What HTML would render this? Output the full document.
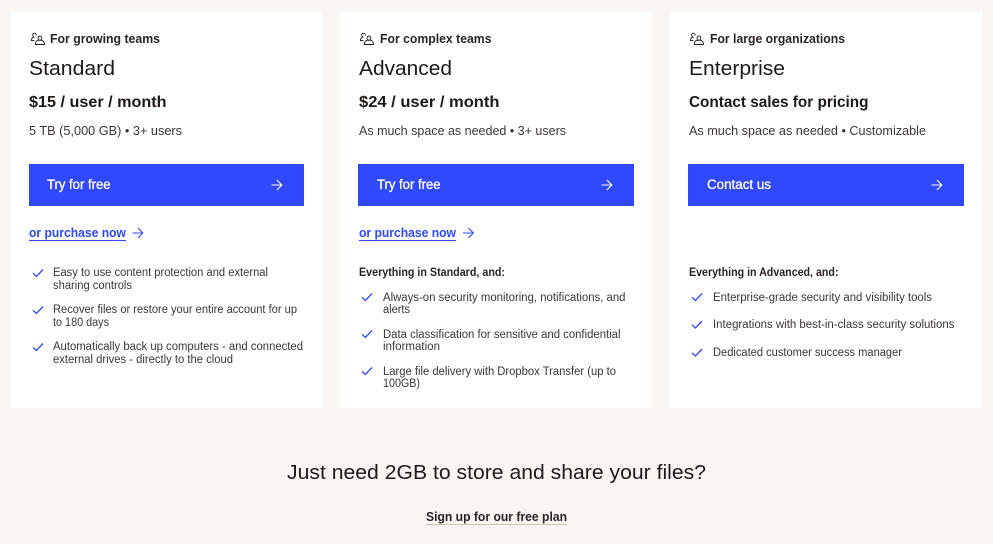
<!DOCTYPE html>
<html>
<head>
<meta charset="utf-8">
<style>
html,body{margin:0;padding:0;background:#f8f5f2;width:993px;height:544px;overflow:hidden}
svg{display:block}
text{font-family:"Liberation Sans",sans-serif;white-space:pre}
.eb{font-size:12.5px;font-weight:700;fill:#2a2525}
.h{font-size:20px;fill:#1e1919}
.p{font-size:15.5px;font-weight:700;fill:#1e1919}
.d{font-size:13px;fill:#3a3636}
.b{font-size:13.5px;fill:#fff;stroke:#fff;stroke-width:.3px}
.l{font-size:12.5px;font-weight:700;fill:#3049ff}
.li{font-size:11.5px;fill:#3a3636}
.e{font-size:11.5px;font-weight:700;fill:#2a2525}
.f{font-size:20px;fill:#1e1919}
.ic{fill:none;stroke:#1e1919;stroke-width:.9}
.ck{fill:none;stroke:#3049ff;stroke-width:1.300}
.aw{fill:none;stroke:#fff;stroke-width:1.100}
.al{fill:none;stroke:#3049ff;stroke-width:1.100}
</style>
</head>
<body>
<svg width="993" height="544" viewBox="0 0 993 544" xmlns="http://www.w3.org/2000/svg">
<defs>
<g id="people"><path class="ic" d="M5.200 2.600C5.400 1.200 4.600.2 3.500.2 2.400.2 1.700 1 1.700 2c0 1 .5 1.700 1.200 2.100C1.300 4.600.4 5.800.4 7.600H3.400"/><path class="ic" d="M4.400 11.500h9c0-2.300-.9-3.700-2.400-4.200H6.800C5.300 7.800 4.400 9.200 4.400 11.500zM8.900 7.200c1.100 0 1.900-.9 1.900-2.100S10 3 8.900 3 7 3.900 7 5.100s.8 2.100 1.900 2.100z"/></g>
<path id="check" class="ck" d="M0 3.800L3.400 7 10 0"/>
<path id="arrowW" class="aw" d="M0 5h10M5.400 0L10.300 5 5.400 10"/>
<path id="arrowB" class="al" d="M0 5h10M5.400 0L10.300 5 5.400 10"/>
</defs>

<rect width="993" height="544" fill="#f8f5f2"/>
<rect x="11" y="12" width="311" height="396" fill="#fff"/>
<rect x="340" y="12" width="312" height="396" fill="#fff"/>
<rect x="670" y="12" width="312" height="396" fill="#fff"/>

<!-- Card 1 -->
<use href="#people" x="31" y="33"/>
<text class="eb" x="50" y="43" textLength="110" lengthAdjust="spacingAndGlyphs">For growing teams</text>
<text class="h" x="29" y="75" textLength="86" lengthAdjust="spacingAndGlyphs">Standard</text>
<text class="p" x="29" y="107" textLength="137.500" lengthAdjust="spacingAndGlyphs">$15 / user / month</text>
<text class="d" x="29" y="135" textLength="153" lengthAdjust="spacingAndGlyphs">5 TB (5,000 GB) • 3+ users</text>
<rect x="29" y="164" width="275" height="42" fill="#3049ff"/>
<text class="b" x="47" y="189" textLength="63.500" lengthAdjust="spacingAndGlyphs">Try for free</text>
<use href="#arrowW" x="271.500" y="180"/>
<text class="l" x="29" y="237" textLength="97" lengthAdjust="spacingAndGlyphs">or purchase now</text>
<rect x="29" y="240" width="97" height="1" fill="#3049ff"/>
<use href="#arrowB" x="132.500" y="228"/>
<use href="#check" x="33" y="269.500"/>
<text class="li" x="53" y="276" textLength="215" lengthAdjust="spacingAndGlyphs">Easy to use content protection and external</text>
<text class="li" x="53" y="289" textLength="79" lengthAdjust="spacingAndGlyphs">sharing controls</text>
<use href="#check" x="33" y="306.500"/>
<text class="li" x="53" y="313" textLength="244" lengthAdjust="spacingAndGlyphs">Recover files or restore your entire account for up</text>
<text class="li" x="53" y="326" textLength="56" lengthAdjust="spacingAndGlyphs">to 180 days</text>
<use href="#check" x="33" y="343.500"/>
<text class="li" x="53" y="350" textLength="250" lengthAdjust="spacingAndGlyphs">Automatically back up computers - and connected</text>
<text class="li" x="53" y="363" textLength="180" lengthAdjust="spacingAndGlyphs">external drives - directly to the cloud</text>

<!-- Card 2 -->
<use href="#people" x="360" y="33"/>
<text class="eb" x="380" y="43" textLength="111.500" lengthAdjust="spacingAndGlyphs">For complex teams</text>
<text class="h" x="359" y="75" textLength="93" lengthAdjust="spacingAndGlyphs">Advanced</text>
<text class="p" x="359" y="107" textLength="140.500" lengthAdjust="spacingAndGlyphs">$24 / user / month</text>
<text class="d" x="359" y="135" textLength="207" lengthAdjust="spacingAndGlyphs">As much space as needed • 3+ users</text>
<rect x="358" y="164" width="276" height="42" fill="#3049ff"/>
<text class="b" x="377" y="189" textLength="63.500" lengthAdjust="spacingAndGlyphs">Try for free</text>
<use href="#arrowW" x="601.500" y="180"/>
<text class="l" x="359" y="237" textLength="97" lengthAdjust="spacingAndGlyphs">or purchase now</text>
<rect x="359" y="240" width="97" height="1" fill="#3049ff"/>
<use href="#arrowB" x="463" y="228"/>
<text class="e" x="359" y="276" textLength="146" lengthAdjust="spacingAndGlyphs">Everything in Standard, and:</text>
<use href="#check" x="362" y="293.500"/>
<text class="li" x="383" y="301" textLength="242.500" lengthAdjust="spacingAndGlyphs">Always-on security monitoring, notifications, and</text>
<text class="li" x="383" y="313" textLength="27" lengthAdjust="spacingAndGlyphs">alerts</text>
<use href="#check" x="362" y="330.500"/>
<text class="li" x="383" y="338" textLength="237.500" lengthAdjust="spacingAndGlyphs">Data classification for sensitive and confidential</text>
<text class="li" x="383" y="350" textLength="57" lengthAdjust="spacingAndGlyphs">information</text>
<use href="#check" x="362" y="367.500"/>
<text class="li" x="383" y="375" textLength="233" lengthAdjust="spacingAndGlyphs">Large file delivery with Dropbox Transfer (up to</text>
<text class="li" x="383" y="387" textLength="37" lengthAdjust="spacingAndGlyphs">100GB)</text>

<!-- Card 3 -->
<use href="#people" x="690" y="33"/>
<text class="eb" x="710" y="43" textLength="135" lengthAdjust="spacingAndGlyphs">For large organizations</text>
<text class="h" x="689" y="75" textLength="96" lengthAdjust="spacingAndGlyphs">Enterprise</text>
<text class="p" x="689" y="107" textLength="179.500" lengthAdjust="spacingAndGlyphs">Contact sales for pricing</text>
<text class="d" x="689" y="135" textLength="237" lengthAdjust="spacingAndGlyphs">As much space as needed • Customizable</text>
<rect x="688" y="164" width="276" height="42" fill="#3049ff"/>
<text class="b" x="707" y="189" textLength="64" lengthAdjust="spacingAndGlyphs">Contact us</text>
<use href="#arrowW" x="931.500" y="180"/>
<text class="e" x="689" y="276" textLength="149.500" lengthAdjust="spacingAndGlyphs">Everything in Advanced, and:</text>
<use href="#check" x="692" y="293.500"/>
<text class="li" x="713" y="301" textLength="219" lengthAdjust="spacingAndGlyphs">Enterprise-grade security and visibility tools</text>
<use href="#check" x="692" y="321"/>
<text class="li" x="713" y="328" textLength="241.500" lengthAdjust="spacingAndGlyphs">Integrations with best-in-class security solutions</text>
<use href="#check" x="692" y="349"/>
<text class="li" x="713" y="356" textLength="189" lengthAdjust="spacingAndGlyphs">Dedicated customer success manager</text>

<!-- Footer -->
<text class="f" x="287" y="479" textLength="419" lengthAdjust="spacingAndGlyphs">Just need 2GB to store and share your files?</text>
<text class="eb" x="426" y="521" textLength="141" lengthAdjust="spacingAndGlyphs">Sign up for our free plan</text>
<rect x="426" y="524" width="141" height="1" fill="#c9c3b8"/>
</svg>
</body>
</html>
